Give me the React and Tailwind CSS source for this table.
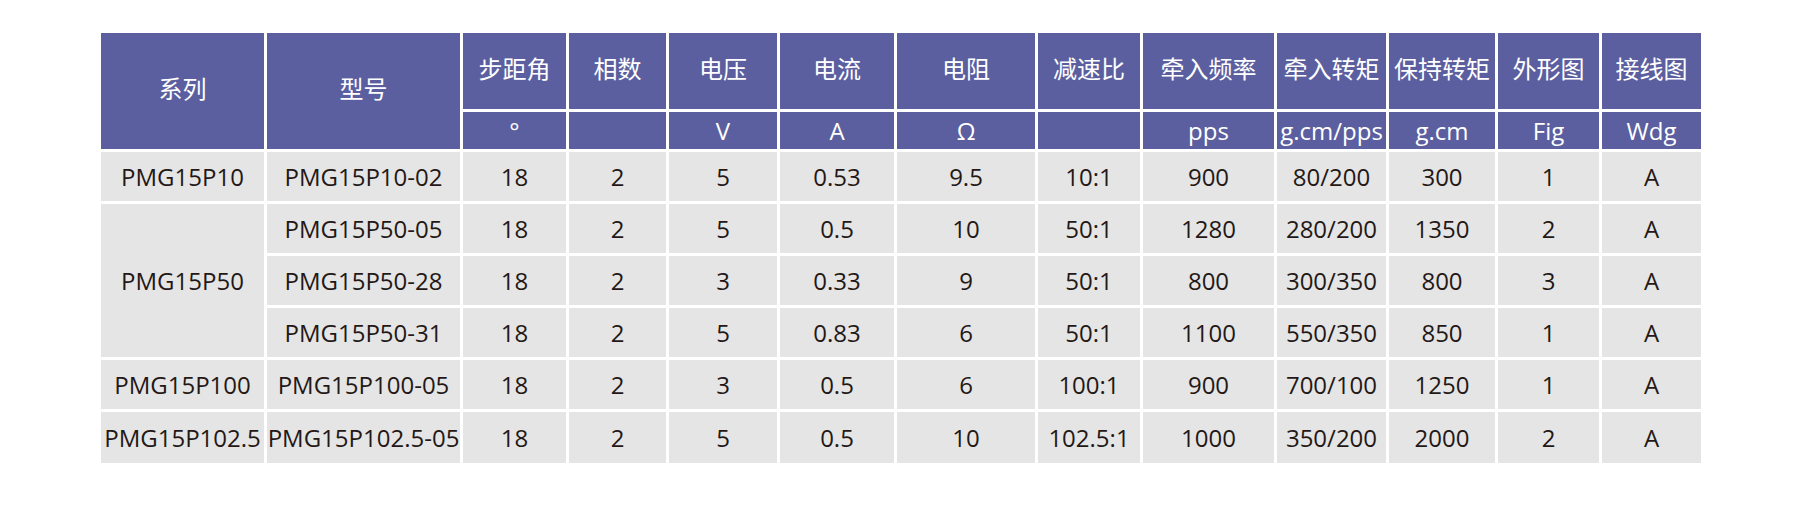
import React from "react";

const heads = [
  ["步距角", "°"],
  ["相数", ""],
  ["电压", "V"],
  ["电流", "A"],
  ["电阻", "Ω"],
  ["减速比", ""],
  ["牵入频率", "pps"],
  ["牵入转矩", "g.cm/pps"],
  ["保持转矩", "g.cm"],
  ["外形图", "Fig"],
  ["接线图", "Wdg"],
];

const rows = [
  { series: "PMG15P10", span: 1, v: ["PMG15P10-02", "18", "2", "5", "0.53", "9.5", "10:1", "900", "80/200", "300", "1", "A"] },
  { series: "PMG15P50", span: 3, v: ["PMG15P50-05", "18", "2", "5", "0.5", "10", "50:1", "1280", "280/200", "1350", "2", "A"] },
  { v: ["PMG15P50-28", "18", "2", "3", "0.33", "9", "50:1", "800", "300/350", "800", "3", "A"] },
  { v: ["PMG15P50-31", "18", "2", "5", "0.83", "6", "50:1", "1100", "550/350", "850", "1", "A"] },
  { series: "PMG15P100", span: 1, v: ["PMG15P100-05", "18", "2", "3", "0.5", "6", "100:1", "900", "700/100", "1250", "1", "A"] },
  { series: "PMG15P102.5", span: 1, v: ["PMG15P102.5-05", "18", "2", "5", "0.5", "10", "102.5:1", "1000", "350/200", "2000", "2", "A"] },
];

const font = { fontFamily: '"Open Sans", "Noto Sans CJK SC", sans-serif' };

export default function App() {
  return (
    <div className="w-[1800px] h-[505px] bg-white pl-[101px] pt-[33px]" style={font}>
      <div className="grid gap-[3px] bg-white w-[1600px] grid-cols-[163px_193px_103px_97px_108px_114px_138px_102px_131px_109px_106px_101px_99px] grid-rows-[76px_37px_49px_49px_49px_49px_49px_51px] text-[24px] leading-none">
        <div className="row-span-2 bg-[#5b5fa0] text-white flex items-center justify-center pb-[4px]">系列</div>
        <div className="row-span-2 bg-[#5b5fa0] text-white flex items-center justify-center pb-[4px]">型号</div>
        {heads.map(([h]) => (
          <div key={h} className="bg-[#5b5fa0] text-white flex items-center justify-center whitespace-nowrap pb-[4px]">{h}</div>
        ))}
        {heads.map(([h, u]) => (
          <div key={h + "u"} className="bg-[#5b5fa0] text-white flex items-center justify-center whitespace-nowrap">{u}</div>
        ))}
        {rows.map((r, i) => (
          <React.Fragment key={i}>
            {r.series && (
              <div
                className={
                  "bg-[#e5e5e5] text-[#231815] flex items-center justify-center whitespace-nowrap " +
                  (r.span === 3 ? "row-span-3" : "")
                }
              >
                {r.series}
              </div>
            )}
            {r.v.map((c, j) => (
              <div key={j} className="bg-[#e5e5e5] text-[#231815] flex items-center justify-center whitespace-nowrap">
                {c}
              </div>
            ))}
          </React.Fragment>
        ))}
      </div>
    </div>
  );
}
